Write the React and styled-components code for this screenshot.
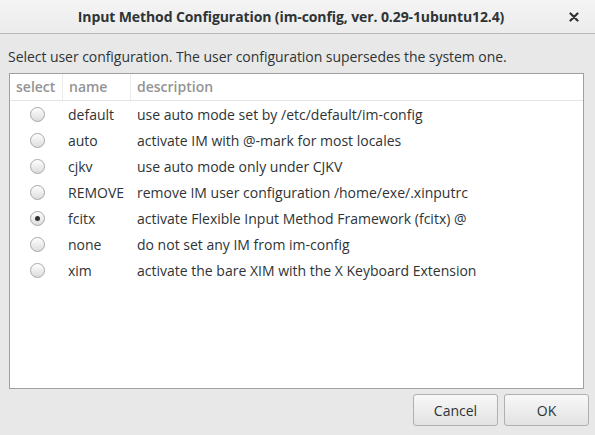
import styled, { createGlobalStyle } from "styled-components"

const GlobalStyle = createGlobalStyle`
  html, body {
    margin: 0;
    padding: 0;
    background: #e8e8e8;
  }
  body {
    font-family: 'Open Sans', 'Noto Sans', sans-serif;
    color: #2e3436;
  }
`

const options = [
  { name: "default", desc: "use auto mode set by /etc/default/im-config" },
  { name: "auto", desc: "activate IM with @-mark for most locales" },
  { name: "cjkv", desc: "use auto mode only under CJKV" },
  { name: "REMOVE", desc: "remove IM user configuration /home/exe/.xinputrc" },
  { name: "fcitx", desc: "activate Flexible Input Method Framework (fcitx) @", selected: true },
  { name: "none", desc: "do not set any IM from im-config" },
  { name: "xim", desc: "activate the bare XIM with the X Keyboard Extension" },
]

export default function App() {
  return (
    <Window>
      <GlobalStyle />
      <TitleBar>
        <Title>Input Method Configuration (im-config, ver. 0.29-1ubuntu12.4)</Title>
        <CloseButton>
          <svg width="10" height="10" viewBox="0 0 10 10">
            <path d="M1.5 1.5 L8.5 8.5 M8.5 1.5 L1.5 8.5" stroke="#2e3436" strokeWidth="2.2" strokeLinecap="round" />
          </svg>
        </CloseButton>
      </TitleBar>

      <Content>
        <Label>Select user configuration. The user configuration supersedes the system one.</Label>

        <Frame>
          <HeaderRow>
            <HeadCell $w={53}>select</HeadCell>
            <HeadCell $w={68}>name</HeadCell>
            <HeadCell $last>description</HeadCell>
          </HeaderRow>

          {options.map((o) => (
            <Row key={o.name}>
              <RadioCell>
                <Radio $checked={o.selected} />
              </RadioCell>
              <NameCell>{o.name}</NameCell>
              <DescCell>{o.desc}</DescCell>
            </Row>
          ))}
        </Frame>
      </Content>

      <ButtonBar>
        <Button>Cancel</Button>
        <Button>OK</Button>
      </ButtonBar>
    </Window>
  )
}

const Window = styled.div`
    width: 595px;
    height: 435px;
    display: flex;
    flex-direction: column;
    background: #e8e8e8;
    overflow: hidden;
`
const TitleBar = styled.div`
    height: 33px;
    flex-shrink: 0;
    display: flex;
    align-items: center;
    justify-content: center;
    position: relative;
    background: linear-gradient(#f4f4f4, #ececec);
    border-bottom: 1px solid #b8b8b8;
`
const Title = styled.div`
    font-size: 14px;
    font-weight: 700;
    letter-spacing: -0.1px;
    color: #2e3436;
    margin-left: -13px;
`
const CloseButton = styled.div`
    position: absolute;
    right: 16px;
    top: 12px;
    display: flex;
`
const Content = styled.div`
    display: flex;
    flex-direction: column;
    padding: 0 11px 0 9px;
`
const Label = styled.div`
    font-size: 14px;
    letter-spacing: -0.05px;
    color: #2e3436;
    height: 39px;
    line-height: 46px;
    margin-left: -1px;
`
const Frame = styled.div`
    height: 314px;
    background: #ffffff;
    border: 1px solid #a0a0a0;
    display: flex;
    flex-direction: column;
`
const HeaderRow = styled.div`
    display: flex;
    height: 26px;
    border-bottom: 1px solid #e4e4e4;
`
const HeadCell = styled.div`
    width: ${(p) => (p.$w ? p.$w + "px" : "auto")};
    flex: ${(p) => (p.$last ? 1 : "none")};
    box-sizing: border-box;
    padding-left: 6px;
    font-size: 14px;
    font-weight: 600;
    color: #949494;
    line-height: 26px;
    border-right: ${(p) => (p.$last ? "none" : "1px solid #ececec")};
`
const Row = styled.div`
    display: flex;
    align-items: center;
    height: 26px;
    font-size: 14px;
    color: #2e3436;
`
const RadioCell = styled.div`
    width: 53px;
    display: flex;
    justify-content: center;
`
const Radio = styled.div`
    width: 15px;
    height: 15px;
    box-sizing: border-box;
    border-radius: 50%;
    border: 1px solid #a8a8a8;
    background: linear-gradient(#ffffff, #dcdcdc);
    display: flex;
    align-items: center;
    justify-content: center;
    margin-left: 1px;
    &::after {
        content: "";
        width: 5px;
        height: 5px;
        border-radius: 50%;
        background: #2e3436;
        display: ${(p) => (p.$checked ? "block" : "none")};
    }
`
const NameCell = styled.div`
    width: 68px;
    padding-left: 5px;
`
const DescCell = styled.div`
    flex: 1;
    padding-left: 1px;
`
const ButtonBar = styled.div`
    display: flex;
    justify-content: flex-end;
    gap: 6px;
    padding: 5px 6px 0 0;
`
const Button = styled.div`
    width: 85px;
    height: 32px;
    box-sizing: border-box;
    border: 1px solid #b0b0b0;
    border-radius: 3px;
    background: linear-gradient(#f8f8f8, #e2e2e2);
    display: flex;
    align-items: center;
    justify-content: center;
    font-size: 14px;
    color: #2e3436;
`
